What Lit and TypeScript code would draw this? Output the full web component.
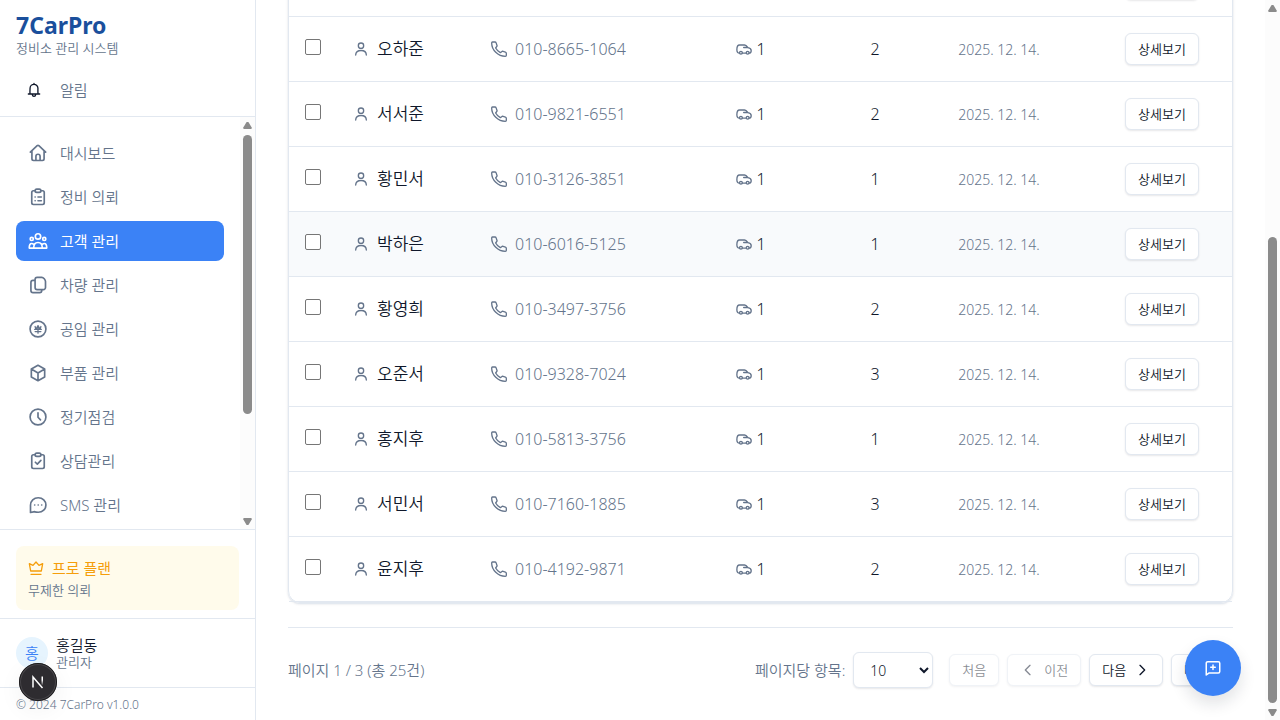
import { LitElement, html, svg, css, nothing } from "lit";
import { customElement, property } from "lit/decorators.js";

const icons: Record<string, unknown> = {
  bell: svg`<path d="M6 17c-.3-3 .1-5 .1-7.500a5.900 5.900 0 0 1 11.800 0c0 2.500-.2 4.500.1 7.500M3.500 18h17M12 3.500V2M9.300 18.500c.3 2 1.300 3 2.700 3s2.400-1 2.700-3"/>`,
  home: svg`<path d="M2.800 11 11 3.200a1.500 1.500 0 0 1 2 0l8.200 7.800M4.700 9.500V19a2 2 0 0 0 2 2h10.600a2 2 0 0 0 2-2V9.500M9.500 21v-5a2.500 2.500 0 0 1 5 0v5"/>`,
  list: svg`<path d="M8.500 4.500H6.500a2 2 0 0 0-2 2V19a2 2 0 0 0 2 2h11a2 2 0 0 0 2-2V6.500a2 2 0 0 0-2-2h-2"/><rect x="8.500" y="2.500" width="7" height="4" rx="2"/><path d="M8.500 12h.1M8.500 16.500h.1M12 12h4M12 16.500h4"/>`,
  group: svg`<circle cx="12" cy="6.500" r="3.200"/><circle cx="4.500" cy="9.500" r="1.900"/><circle cx="19.500" cy="9.500" r="1.900"/><path d="M6.800 20.500c0-4 1.500-6.700 5.200-6.700s5.200 2.700 5.200 6.700zM6 20.500H1.500c0-3.500.8-5.500 3-5.500.8 0 1.500.3 2 .8M18 20.500h4.500c0-3.500-.8-5.500-3-5.500-.8 0-1.500.3-2 .8"/>`,
  copy: svg`<path d="M11 2.800h5.500c2 0 4.500 3 4.500 5V15a2.500 2.500 0 0 1-2.500 2.500H11A2.500 2.500 0 0 1 8.500 15V5.300A2.500 2.500 0 0 1 11 2.800zM8 6.500H6A2.500 2.500 0 0 0 3.500 9v9.700A2.500 2.500 0 0 0 6 21.200h8a2.500 2.500 0 0 0 2.500-2.500v-1"/>`,
  won: svg`<circle cx="12" cy="12" r="9.500"/><path stroke-width="1.500" d="m8.500 9 1 3.500L12 8l2.500 4.500 1-3.500M8 12.500h8M8.500 15h7M12 8v9"/>`,
  box: svg`<path d="M12 2.700 20 7.200v9.600l-8 4.500-8-4.500V7.200zM4.500 7.500 12 12l7.500-4.500M12 12v9"/>`,
  clock: svg`<circle cx="12" cy="12" r="9.500"/><path d="M12 7v5.300l3 3.200"/>`,
  check: svg`<path d="M8.500 4.500H6.500a2 2 0 0 0-2 2V19a2 2 0 0 0 2 2h11a2 2 0 0 0 2-2V6.500a2 2 0 0 0-2-2h-2"/><rect x="8.500" y="2.500" width="7" height="4" rx="2"/><path d="m8.800 13.500 2.400 2.300 4.300-4.500"/>`,
  chat: svg`<path d="M3 21v-8.700C3 7 7 3.300 12.300 3.300S21.500 7 21.500 12s-4 8.700-9.200 8.700c-1.800 0-3 0-4.300-.7zM8 12h.1M12.200 12h.1M16.400 12h.1"/>`,
  crown: svg`<path d="M4 16.500h16L22 5.500 16.500 8 12 3 7.500 8 2 5.500zM4.500 21.500h15"/>`,
  user: svg`<circle cx="12" cy="7" r="4"/><path d="M4 21c0-4.500 3.200-6.800 8-6.800s8 2.300 8 6.800"/>`,
  phone: svg`<path d="M2.300 1.500h3.500a2 2 0 0 1 1.900 1.300l1.500 4.600L7 10.500a17 17 0 0 0 7 7l3-2.200 4.600 1.500a2 2 0 0 1 1.400 1.900v2.800a1.500 1.500 0 0 1-1.500 1.500C10.500 23 1 13.500 1 3a1.500 1.500 0 0 1 1.300-1.500z"/>`,
  car: svg`<path d="M5.300 18.200C2.500 18.200 1.300 16.500 1.300 13c0-4 1-7 4-7h7.500c2.500 0 4 2.500 5 4 2.500.4 5 1.200 5 4.500 0 2.200-.8 3.700-3.100 3.700M9.500 18.200h6M11.500 9.800h5"/><circle cx="7.400" cy="17.700" r="2.100"/><circle cx="17.500" cy="17.700" r="2.100"/>`,
  left: svg`<path d="m15 5-7 7 7 7"/>`,
  right: svg`<path d="m9 5 7 7-7 7"/>`,
  feedback: svg`<path d="M3 21.300V5.500A2 2 0 0 1 5 3.500h14a2 2 0 0 1 2 2v11a2 2 0 0 1-2 2H7zM12 8v6M9 11h6"/>`,
};

const icon = (name: string, cls = "icon") =>
  html`<svg class=${cls} viewBox="0 0 24 24" aria-hidden="true">${icons[name]}</svg>`;

const shared = css`
  * { box-sizing: border-box; }
  .icon, .icon-lg, .icon-fab {
    display: block;
    flex: none;
    width: 16px;
    height: 16px;
    fill: none;
    stroke: currentColor;
    stroke-width: 2;
    stroke-linecap: round;
    stroke-linejoin: round;
  }
  .icon-lg { width: 20px; height: 20px; }
  .icon-fab { width: 18px; height: 18px; }
`;

@customElement("scroll-rail")
export class ScrollRail extends LitElement {
  @property({ type: Number }) before = 0;
  @property({ type: Number }) size = 50;
  static styles = css`
    :host { display: flex; flex-direction: column; align-items: center; flex: none; width: 15px; padding: 5px 0 4px; background: #fcfcfc; }
    .up, .down { width: 9px; height: 7px; background: #8b8b8b; flex: none; }
    .up { clip-path: polygon(40% 0, 60% 0, 100% 85%, 90% 100%, 10% 100%, 0 85%); }
    .down { clip-path: polygon(10% 0, 90% 0, 100% 15%, 60% 100%, 40% 100%, 0 15%); }
    .track { flex: 1; width: 9px; margin: 6px 0; display: flex; flex-direction: column; }
    .thumb { border-radius: 5px; background: #8b8b8b; }
  `;
  render() {
    return html`<div class="up"></div>
      <div class="track">
        <div style="height:${this.before}%"></div>
        <div class="thumb" style="height:${this.size}%"></div>
      </div>
      <div class="down"></div>`;
  }
}

const menu = [
  ["home", "대시보드"],
  ["list", "정비 의뢰"],
  ["group", "고객 관리"],
  ["copy", "차량 관리"],
  ["won", "공임 관리"],
  ["box", "부품 관리"],
  ["clock", "정기점검"],
  ["check", "상담관리"],
  ["chat", "SMS 관리"],
];

@customElement("side-bar")
export class SideBar extends LitElement {
  static styles = [shared, css`
    :host { display: flex; flex-direction: column; width: 256px; height: 100vh; flex: none; border-right: 1px solid #e2e8f0; background: #fff; color: #64748b; }
    .head { height: 117px; padding: 9px 16px; border-bottom: 1px solid #e2e8f0; flex: none; }
    .brand { margin: 0; font-size: 23px; line-height: 32px; font-weight: 700; color: #1a4f9c; }
    .sub { margin: 0; font-size: 13px; line-height: 14px; }
    .alert { display: flex; align-items: center; gap: 16px; width: 100%; height: 32px; margin-top: 19px; padding: 0 10px; border: 0; background: none; font: inherit; font-size: 15px; line-height: 20px; color: #64748b; }
    .alert .icon { color: #0f172a; }
    .alert span { padding-left: 2px; }
    .middle { flex: 1; min-height: 0; display: flex; }
    nav { flex: 1; min-height: 0; overflow: hidden; padding: 16px; display: flex; flex-direction: column; gap: 4px; }
    nav a { display: flex; flex: none; align-items: center; gap: 12px; height: 40px; padding: 0 12px; border-radius: 8px; color: #64748b; text-decoration: none; font-size: 15px; line-height: 20px; }
    nav a.active { background: #3b82f6; color: #fff; font-weight: 400; }
    .plan-wrap { padding: 16px 16px 8px; border-top: 1px solid #e2e8f0; }
    .plan { border-radius: 8px; background: #fffbeb; padding: 12px; height: 64px; }
    .plan-name { display: flex; align-items: center; gap: 8px; font-size: 15px; line-height: 20px; color: #f59e0b; font-weight: 400; }
    .plan-note { margin: 4px 0 0; font-size: 13px; line-height: 16px; }
    .user { display: flex; align-items: center; gap: 8px; height: 69px; padding: 0 16px; border-top: 1px solid #e2e8f0; }
    .avatar { display: grid; place-items: center; width: 32px; height: 32px; border-radius: 50%; background: #e6f4fe; color: #3b82f6; font-size: 15px; }
    .user-name { font-size: 15px; line-height: 18px; color: #0f172a; }
    .user-role { font-size: 13px; line-height: 16px; }
    .foot { height: 33px; padding: 9px 16px 7px; border-top: 1px solid #e2e8f0; font-size: 12px; line-height: 16px; }
    .dev { position: fixed; left: 19px; bottom: 19px; display: grid; place-items: center; width: 38px; height: 38px; padding: 0; border: 2px solid #48464a; border-radius: 50%; background: #2e2c30; outline: 1px solid #1c1b1d; outline-offset: -1px; box-shadow: 0 8px 24px rgba(0, 0, 0, 0.06); }
    .dev svg { width: 14px; height: 14px; fill: none; stroke: #fff; stroke-width: 1.500; }
  `];
  render() {
    return html`
      <header class="head">
        <h1 class="brand">7CarPro</h1>
        <p class="sub">정비소 관리 시스템</p>
        <button class="alert" type="button">${icon("bell")}<span>알림</span></button>
      </header>
      <div class="middle">
        <nav>
          ${menu.map(([name, label]) => html`
            <a href="#" class=${label === "고객 관리" ? "active" : ""}>${icon(name, "icon-lg")}<span>${label}</span></a>`)}
        </nav>
        <scroll-rail before="0" size="74"></scroll-rail>
      </div>
      <div class="plan-wrap">
        <div class="plan">
          <div class="plan-name">${icon("crown")}<span>프로 플랜</span></div>
          <p class="plan-note">무제한 의뢰</p>
        </div>
      </div>
      <div class="user">
        <div class="avatar">홍</div>
        <div>
          <div class="user-name">홍길동</div>
          <div class="user-role">관리자</div>
        </div>
      </div>
      <footer class="foot">© 2024 7CarPro v1.0.0</footer>
      <button class="dev" type="button" aria-label="N">
        <svg viewBox="0 0 14 14">
          <defs><linearGradient id="fade" x1="0" y1="0" x2="0" y2="1"><stop offset=".4" stop-color="#fff"/><stop offset="1" stop-color="#fff" stop-opacity="0"/></linearGradient></defs>
          <path d="M2 12.500V2l9.500 11"/><rect x="10.500" y="1.500" width="1.500" height="9" fill="url(#fade)" stroke="none"/>
        </svg>
      </button>`;
  }
}

interface Customer { name: string; phone: string; count: string; hover?: boolean }
const customers: Customer[] = [
  { name: "오하준", phone: "010-8665-1064", count: "2" },
  { name: "서서준", phone: "010-9821-6551", count: "2" },
  { name: "황민서", phone: "010-3126-3851", count: "1" },
  { name: "박하은", phone: "010-6016-5125", count: "1", hover: true },
  { name: "황영희", phone: "010-3497-3756", count: "2" },
  { name: "오준서", phone: "010-9328-7024", count: "3" },
  { name: "홍지후", phone: "010-5813-3756", count: "1" },
  { name: "서민서", phone: "010-7160-1885", count: "3" },
  { name: "윤지후", phone: "010-4192-9871", count: "2" },
];

@customElement("app-root")
export class AppRoot extends LitElement {
  static styles = [shared, css`
    :host { display: flex; height: 100vh; overflow: hidden; background: #fff; color: #0f172a; font-family: "Noto Sans", "Noto Sans CJK KR", sans-serif; font-size: 16px; font-weight: 350; line-height: 24px; }
    main { flex: 1; min-width: 0; display: flex; flex-direction: column; justify-content: flex-end; padding: 0 32px 32px; overflow: hidden; }
    .card { flex: none; border: 1px solid #e2e8f0; border-radius: 12px; box-shadow: 0 1px 1px #e2e8f0, 0 1px 3px rgba(15, 23, 42, 0.1); }
    table { width: 100%; table-layout: fixed; border-collapse: separate; border-spacing: 0; }
    .c-check { width: 48px; }
    .c-name { width: 138px; }
    .c-phone { width: 183px; }
    .c-car { width: 186px; }
    .c-count { width: 62px; }
    .c-date { width: 186px; }
    .c-action { width: 140px; }
    td { height: 65px; padding: 0 16px; border-bottom: 1px solid #e2e8f0; }
    .hover td { background: #f8fafc; }
    .center { text-align: center; }
    input { display: block; width: 16px; height: 16px; margin: 0 0 4px; appearance: none; border: 1px solid #767676; border-radius: 2px; background: #fff; }
    .cell { display: flex; align-items: center; gap: 8px; }
    .cell .icon { color: #64748b; }
    .name { font-size: 17px; }
    .phone { color: #64748b; }
    .cars { justify-content: center; gap: 4px; }
    .date { padding-top: 2px; font-size: 14px; color: #64748b; text-align: center; }
    .btn { display: inline-flex; align-items: center; gap: 8px; height: 32px; padding: 0 12px; border: 1px solid #e2e8f0; border-radius: 6px; background: #fff; color: #0f172a; font: inherit; font-size: 13px; line-height: 16px; white-space: nowrap; box-shadow: 0 1px 2px rgba(15, 23, 42, 0.1); vertical-align: middle; }
    .btn:disabled { opacity: 0.5; }
    .pager { flex: none; display: flex; align-items: center; justify-content: space-between; margin-top: 24px; padding-top: 24px; border-top: 1px solid #e2e8f0; color: #64748b; font-size: 15px; line-height: 20px; }
    .controls { display: flex; align-items: center; gap: 16px; }
    .group { display: flex; align-items: center; gap: 8px; }
    select { width: 80px; height: 36px; padding: 0 0 0 12px; border: 1px solid #e2e8f0; border-radius: 6px; background: #fff; color: #0f172a; font: inherit; font-size: 14px; box-shadow: 0 1px 2px rgba(15, 23, 42, 0.1); }
    .fab { position: fixed; right: 39px; bottom: 24px; display: grid; place-items: center; width: 56px; height: 56px; padding: 0; border: 0; border-radius: 50%; background: #3b82f6; color: #fff; box-shadow: 0 8px 16px rgba(15, 23, 42, 0.12); }
  `];

  row(c?: Customer) {
    return html`<tr class=${c?.hover ? "hover" : ""}>
      <td>${c ? html`<input type="checkbox" aria-label=${c.name} />` : nothing}</td>
      <td>${c ? html`<div class="cell name">${icon("user")}<span>${c.name}</span></div>` : nothing}</td>
      <td>${c ? html`<div class="cell phone">${icon("phone")}<span>${c.phone}</span></div>` : nothing}</td>
      <td>${c ? html`<div class="cell cars">${icon("car")}<span>1</span></div>` : nothing}</td>
      <td class="center">${c?.count}</td>
      <td class="date">${c ? "2025. 12. 14." : nothing}</td>
      <td class="center"><button class="btn" type="button">상세보기</button></td>
    </tr>`;
  }

  render() {
    return html`
      <side-bar></side-bar>
      <main>
        <div class="card">
          <table>
            <colgroup>
              <col class="c-check" /><col class="c-name" /><col class="c-phone" /><col class="c-car" /><col class="c-count" /><col class="c-date" /><col class="c-action" />
            </colgroup>
            <tbody>${this.row()}${customers.map((c) => this.row(c))}</tbody>
          </table>
        </div>
        <div class="pager">
          <span>페이지 1 / 3 (총 25건)</span>
          <div class="controls">
            <div class="group">
              <label for="size">페이지당 항목:</label>
              <select id="size"><option>10</option></select>
            </div>
            <div class="group">
              <button class="btn" type="button" disabled>처음</button>
              <button class="btn" type="button" disabled>${icon("left")}이전</button>
              <button class="btn" type="button">다음${icon("right")}</button>
              <button class="btn" type="button">마지막</button>
            </div>
          </div>
        </div>
      </main>
      <scroll-rail before="32" size="68"></scroll-rail>
      <button class="fab" type="button" aria-label="+">${icon("feedback", "icon-fab")}</button>`;
  }
}
